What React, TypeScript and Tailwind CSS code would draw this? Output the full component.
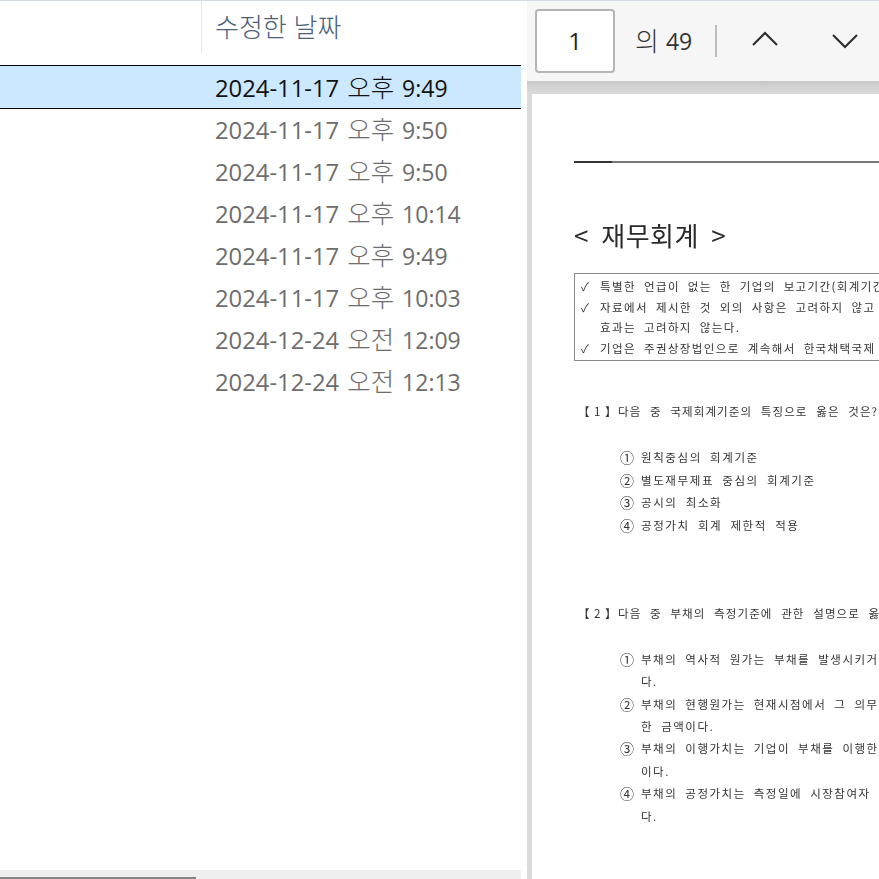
const rows = [
  ["2024-11-17", "오후", "9:49"],
  ["2024-11-17", "오후", "9:50"],
  ["2024-11-17", "오후", "9:50"],
  ["2024-11-17", "오후", "10:14"],
  ["2024-11-17", "오후", "9:49"],
  ["2024-11-17", "오후", "10:03"],
  ["2024-12-24", "오전", "12:09"],
  ["2024-12-24", "오전", "12:13"],
];

const uiFont = "font-['Open_Sans','Noto_Sans_CJK_KR',sans-serif]";
const docFont = "font-['Noto_Sans_CJK_KR','Noto_Sans',sans-serif]";

const firstChoices = [
  ["①", "원칙중심의 회계기준"],
  ["②", "별도재무제표 중심의 회계기준"],
  ["③", "공시의 최소화"],
  ["④", "공정가치 회계 제한적 적용"],
];

const secondChoices = [
  ["①", "부채의 역사적 원가는 부채를 발생시키거", "다."],
  ["②", "부채의 현행원가는 현재시점에서 그 의무", "한 금액이다."],
  ["③", "부채의 이행가치는 기업이 부채를 이행한", "이다."],
  ["④", "부채의 공정가치는 측정일에 시장참여자", "다."],
];

function FileList() {
  return (
    <div className={`w-[521px] shrink-0 flex flex-col ${uiFont}`}>
      <div className="h-[64px] shrink-0 flex items-start">
        <div className="w-[202px] h-[52px] border-r border-[#e5e5e5]" />
        <div className="pl-[13px] pt-[8px] text-[26px] leading-[36px] text-[#4c607a] font-light">수정한 날짜</div>
      </div>
      <div className="flex-1 flex flex-col">
        {rows.map(([date, period, time], i) => (
          <div
            key={i}
            className={
              i === 0
                ? "h-[44px] -mb-px pl-[215px] flex items-baseline leading-[42px] text-[23.8px] text-[#111111] bg-[#cce8ff] border-y border-black"
                : "h-[42px] pl-[215px] flex items-baseline leading-[42px] text-[23.8px] text-[#6d6d6d]"
            }
          >
            <span>{date}</span>
            <span className="ml-[8px] text-[25.5px] font-light">{period}</span>
            <span className="ml-[8px] text-[23px]">{time}</span>
          </div>
        ))}
      </div>
      <div className="h-[9px] shrink-0 bg-[#efefef] pt-[7px]">
        <div className="h-[2px] w-[196px] bg-[#858585]" />
      </div>
    </div>
  );
}

function Toolbar() {
  return (
    <div className={`h-[80px] shrink-0 bg-[#f6f6f6] flex items-center pl-[8px] ${uiFont}`}>
      <div className="w-[80px] h-[64px] bg-white border-2 border-[#b4b4b4] rounded-[4px] flex items-center justify-center text-[24px] text-[#222222]">
        1
      </div>
      <div className="ml-[20px] flex items-center text-[23px] text-[#333333]">
        <span className="text-[26px] font-light">의</span>
        <span className="ml-[7px]">49</span>
      </div>
      <div className="ml-[23px] w-[2px] h-[32px] bg-[#bdbdbd]" />
      <svg className="ml-[35px] -mt-[4px]" width="26" height="16" viewBox="0 0 26 16" fill="none" stroke="#2b2b2b" strokeWidth="2">
        <path d="M1 14 L13 2 L25 14" />
      </svg>
      <svg className="ml-[54px]" width="26" height="16" viewBox="0 0 26 16" fill="none" stroke="#2b2b2b" strokeWidth="2">
        <path d="M1 2 L13 14 L25 2" />
      </svg>
    </div>
  );
}

function DocPage() {
  return (
    <div className={`flex-1 bg-white pl-[42px] pt-[67px] overflow-hidden whitespace-nowrap text-[#333333] blur-[0.35px] ${docFont}`}>
      <div className="h-[2px] bg-[#777777]">
        <div className="w-[38px] h-[2px] bg-[#333333]" />
      </div>
      <div className="mt-[54px] h-[36px] text-[26px] leading-[36px] tracking-[0.5px] [word-spacing:6px] text-[#2a2a2a]">&lt; 재무회계 &gt;</div>
      <div className="mt-[20px] h-[88px] -mr-[40px] border border-[#8a8a8a] pl-[6px] pt-[2px] text-[11.5px] leading-[20.7px] tracking-[1.4px] [word-spacing:4px]">
        <div className="flex">
          <span className="w-[19px] shrink-0">✓</span>
          <span>특별한 언급이 없는 한 기업의 보고기간(회계기간</span>
        </div>
        <div className="flex">
          <span className="w-[19px] shrink-0">✓</span>
          <span>자료에서 제시한 것 외의 사항은 고려하지 않고</span>
        </div>
        <div className="pl-[19px]">효과는 고려하지 않는다.</div>
        <div className="flex">
          <span className="w-[19px] shrink-0">✓</span>
          <span>기업은 주권상장법인으로 계속해서 한국채택국제</span>
        </div>
      </div>
      <div className="mt-[40px] pl-[4px] flex text-[11.5px] leading-[20px] tracking-[1.1px] [word-spacing:5px]">
        <span className="w-[40px] shrink-0 tracking-normal [word-spacing:2px]">【 1 】</span>
        <span>다음 중 국제회계기준의 특징으로 옳은 것은?</span>
      </div>
      <div className="mt-[25px] pl-[46px] text-[11.5px] leading-[22.7px] tracking-[1.6px] [word-spacing:4px]">
        {firstChoices.map(([mark, text]) => (
          <div key={mark} className="flex">
            <span className="w-[21px] shrink-0 text-[14px] tracking-normal">{mark}</span>
            <span>{text}</span>
          </div>
        ))}
      </div>
      <div className="mt-[66px] pl-[4px] flex text-[11.5px] leading-[20px] tracking-[1.1px] [word-spacing:5px]">
        <span className="w-[40px] shrink-0 tracking-normal [word-spacing:2px]">【 2 】</span>
        <span>다음 중 부채의 측정기준에 관한 설명으로 옳</span>
      </div>
      <div className="mt-[25px] pl-[46px] text-[11.5px] leading-[22.4px] tracking-[1.5px] [word-spacing:4px]">
        {secondChoices.map(([mark, text, rest]) => (
          <div key={mark}>
            <div className="flex">
              <span className="w-[21px] shrink-0 text-[14px] tracking-normal">{mark}</span>
              <span>{text}</span>
            </div>
            <div className="pl-[21px]">{rest}</div>
          </div>
        ))}
      </div>
    </div>
  );
}

export default function App() {
  return (
    <div className="w-[879px] h-[879px] overflow-hidden bg-white flex flex-col">
      <div className="h-px shrink-0 bg-[#d5dbe5]" />
      <div className="flex-1 min-h-0 flex">
        <FileList />
        <div className="w-[6px] shrink-0 bg-white" />
        <div className="flex-1 min-w-0 flex flex-col bg-[#dadada]">
          <Toolbar />
          <div className="flex-1 min-h-0 flex flex-col pt-[13px] pl-[5px] bg-gradient-to-b from-[#c8c8c8] to-[#dadada] to-[12px]">
            <DocPage />
          </div>
        </div>
      </div>
    </div>
  );
}
